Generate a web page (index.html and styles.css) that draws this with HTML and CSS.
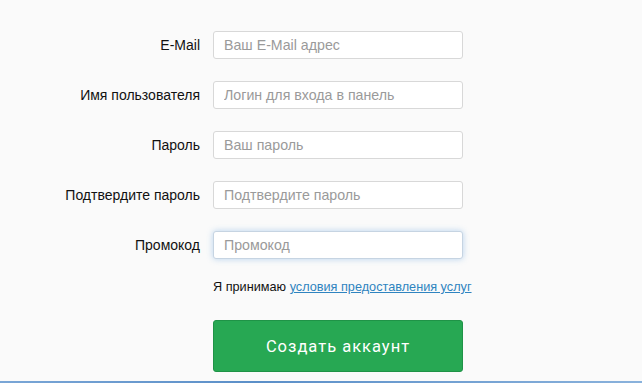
FILE: index.html
```html
<!DOCTYPE html>
<html lang="ru">
<head>
    <meta charset="UTF-8">
    <title>Регистрация</title>
    <link rel="stylesheet" href="styles.css">
</head>
<body>
    <div class="page">
        <form class="signup">
            <label class="label" for="email">E-Mail</label>
            <input class="field" type="text" id="email" placeholder="Ваш E-Mail адрес">

            <label class="label" for="username">Имя пользователя</label>
            <input class="field" type="text" id="username" placeholder="Логин для входа в панель">

            <label class="label" for="password">Пароль</label>
            <input class="field" type="password" id="password" placeholder="Ваш пароль">

            <label class="label" for="password2">Подтвердите пароль</label>
            <input class="field" type="password" id="password2" placeholder="Подтвердите пароль">

            <label class="label" for="promo">Промокод</label>
            <input class="field focused" type="text" id="promo" placeholder="Промокод">

            <div class="terms">Я принимаю <a href="#">условия предоставления услуг</a></div>

            <button type="submit" class="button">Создать аккаунт</button>
        </form>
    </div>
    <div class="bottom-line"></div>
</body>
</html>
```

FILE: styles.css
```css
html, body {
    height: 100%;
}
body {
    margin: 0;
    display: flex;
    flex-direction: column;
    background-color: #fafafa;
    font-family: "Liberation Sans", Arial, sans-serif;
    color: #111;
}
.page {
    flex: 1;
}
.signup {
    display: grid;
    grid-template-columns: 200px 250px;
    column-gap: 13px;
    row-gap: 22px;
    align-items: center;
    padding-top: 31px;
}
.label {
    text-align: right;
    font-size: 14px;
    color: #111;
}
.field {
    box-sizing: border-box;
    height: 28px;
    width: 250px;
    margin: 0;
    padding: 0 10px;
    border: 1px solid #d8d8d8;
    border-radius: 3px;
    background: #fff;
    font-family: inherit;
    font-size: 14.2px;
    color: #333;
    outline: none;
}
.field::placeholder {
    color: #9a9a9a;
}
.focused {
    border-color: #c6d4e2;
    box-shadow: 0 0 6px rgba(102, 165, 225, 0.45);
}
.terms {
    grid-column: 2;
    width: 280px;
    margin-top: -1px;
    font-size: 12.7px;
    color: #111;
}
.terms a {
    color: #2f84c0;
}
.button {
    grid-column: 2;
    box-sizing: border-box;
    width: 250px;
    height: 52px;
    margin-top: 4px;
    border: 1px solid #1f9347;
    border-radius: 3px;
    background-color: #27a853;
    color: #fff;
    font-family: "Roboto", sans-serif;
    font-size: 16.5px;
    letter-spacing: 1px;
    cursor: pointer;
}
.bottom-line {
    height: 2px;
    background: linear-gradient(to right, #7aa6d6, #5b8fc8 40%, #8ab2dc);
}
```
